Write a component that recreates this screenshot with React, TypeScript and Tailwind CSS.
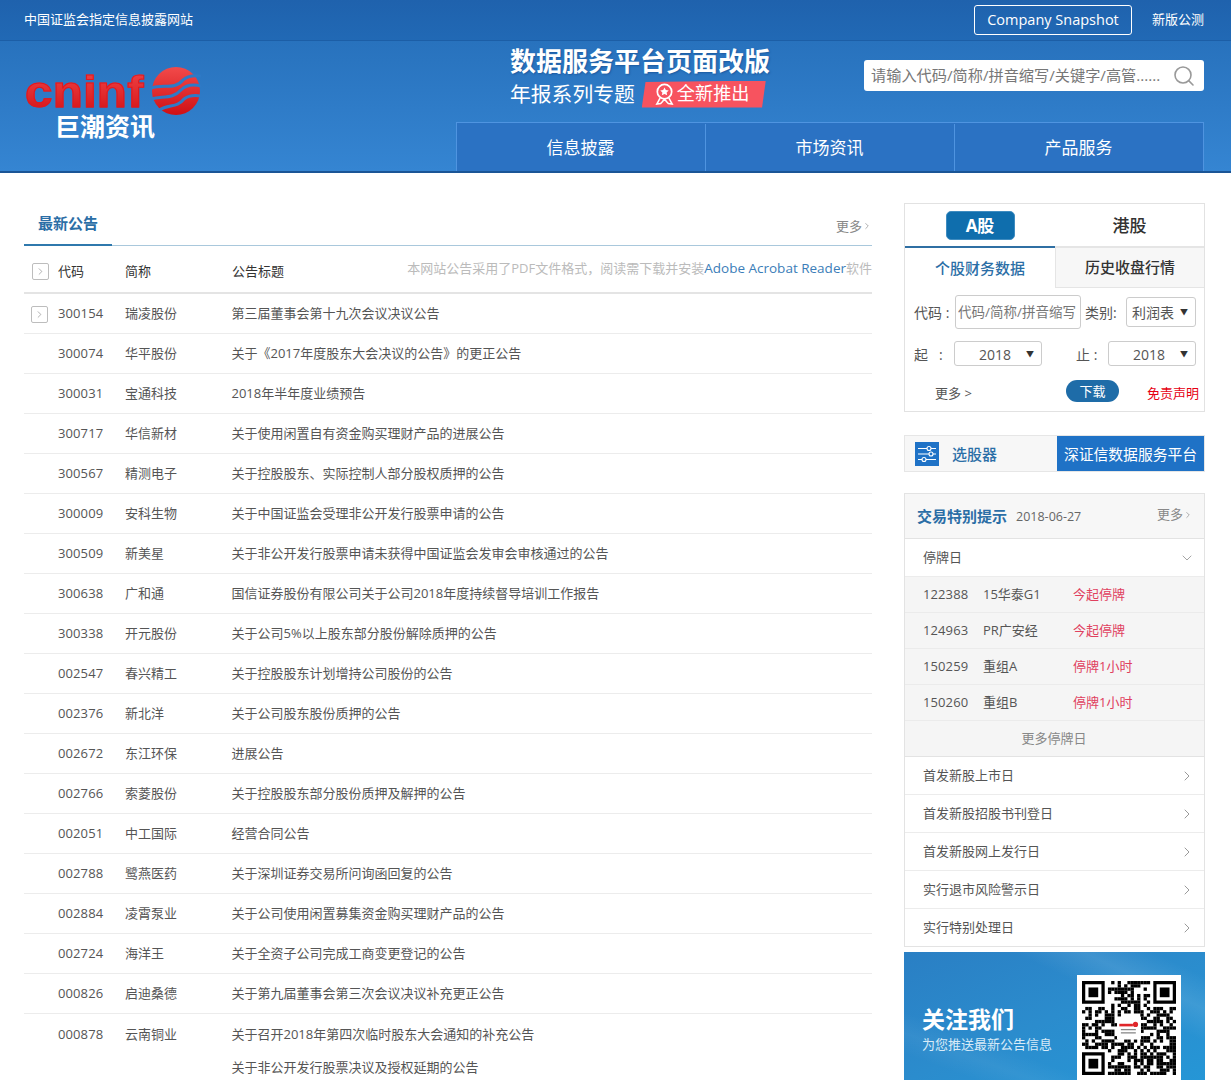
import React from "react";
import { ChevronRight, ChevronDown, Search } from "lucide-react";

const rows: [string, string, string][] = [
  ["300154", "瑞凌股份", "第三届董事会第十九次会议决议公告"],
  ["300074", "华平股份", "关于《2017年度股东大会决议的公告》的更正公告"],
  ["300031", "宝通科技", "2018年半年度业绩预告"],
  ["300717", "华信新材", "关于使用闲置自有资金购买理财产品的进展公告"],
  ["300567", "精测电子", "关于控股股东、实际控制人部分股权质押的公告"],
  ["300009", "安科生物", "关于中国证监会受理非公开发行股票申请的公告"],
  ["300509", "新美星", "关于非公开发行股票申请未获得中国证监会发审会审核通过的公告"],
  ["300638", "广和通", "国信证券股份有限公司关于公司2018年度持续督导培训工作报告"],
  ["300338", "开元股份", "关于公司5%以上股东部分股份解除质押的公告"],
  ["002547", "春兴精工", "关于控股股东计划增持公司股份的公告"],
  ["002376", "新北洋", "关于公司股东股份质押的公告"],
  ["002672", "东江环保", "进展公告"],
  ["002766", "索菱股份", "关于控股股东部分股份质押及解押的公告"],
  ["002051", "中工国际", "经营合同公告"],
  ["002788", "鹭燕医药", "关于深圳证券交易所问询函回复的公告"],
  ["002884", "凌霄泵业", "关于公司使用闲置募集资金购买理财产品的公告"],
  ["002724", "海洋王", "关于全资子公司完成工商变更登记的公告"],
  ["000826", "启迪桑德", "关于第九届董事会第三次会议决议补充更正公告"],
];

const halts = [
  ["122388", "15华泰G1", "今起停牌"],
  ["124963", "PR广安经", "今起停牌"],
  ["150259", "重组A", "停牌1小时"],
  ["150260", "重组B", "停牌1小时"],
];

const links = ["首发新股上市日", "首发新股招股书刊登日", "首发新股网上发行日", "实行退市风险警示日", "实行特别处理日"];

const Toggle = () => (
  <span className="flex h-[17px] w-[17px] items-center justify-center rounded-[2px] border border-[#bdbdbd] text-[#888]">
    <ChevronRight size={11} strokeWidth={1.4} />
  </span>
);

const Pick = ({ w, label, center, tall }: { w: string; label: string; center?: boolean; tall?: boolean }) => (
  <div className={`${w} ${tall ? "h-[30px]" : "h-[25px]"} flex items-center justify-between rounded-[3px] border border-[#ccc] pr-[7px] text-[14px] text-[#555] ${center ? "pl-[24px]" : "pl-[5px]"}`}>
    <span className="pt-[1px]">{label}</span>
    <span className="text-[8px] text-[#333]">▼</span>
  </div>
);

function QR() {
  const n = 29;
  const cells: React.ReactNode[] = [];
  let s = 628;
  const finder = (x: number, y: number, ox: number, oy: number) => {
    const dx = x - ox;
    const dy = y - oy;
    return dx >= -1 && dx <= 7 && dy >= -1 && dy <= 7;
  };
  for (let y = 0; y < n; y++) {
    for (let x = 0; x < n; x++) {
      s = (s * 1103515245 + 12345) & 0x7fffffff;
      const on = ((s >> 16) & 15) < 9;
      const inFinder = finder(x, y, 0, 0) || finder(x, y, 22, 0) || finder(x, y, 0, 22);
      const inLogo = x >= 11 && x <= 17 && y >= 11 && y <= 17;
      if (on && !inFinder && !inLogo) cells.push(<rect key={`${x}-${y}`} x={x} y={y} width="1.02" height="1.02" />);
    }
  }
  const F = ({ x, y }: { x: number; y: number }) => (
    <g>
      <path fillRule="evenodd" d={`M${x} ${y}h7v7h-7zM${x + 1} ${y + 1}v5h5v-5z`} />
      <rect x={x + 2} y={y + 2} width="3" height="3" />
    </g>
  );
  return (
    <svg viewBox="0 0 29 29" className="h-[94px] w-[94px]" fill="#000">
      {cells}
      <F x={0} y={0} />
      <F x={22} y={0} />
      <F x={0} y={22} />
      <rect x="10.8" y="11" width="7.4" height="7" fill="#fff" />
      <rect x="11.5" y="13.2" width="4.2" height="0.8" fill="#e0262a" />
      <circle cx="16.5" cy="13.4" r="0.8" fill="#e0262a" />
      <rect x="12" y="14.8" width="4.6" height="0.4" fill="#888" />
      <rect x="12" y="15.8" width="4.6" height="0.4" fill="#888" />
    </svg>
  );
}

export default function App() {
  return (
    <div className="h-[1080px] w-[1231px] overflow-hidden bg-white font-['Open_Sans','Noto_Sans_CJK_SC',sans-serif] text-[13px] text-[#555]">
      <header className="h-[173px] border-b-2 border-[#1a5596] bg-[#2a74bf]">
        <div className="flex h-[41px] items-center justify-between border-b border-[#1c5ea6] bg-gradient-to-b from-[#1f62ad] to-[#2169b5] pl-[24px] pr-[27px] text-white">
          <span className="text-[13px]">中国证监会指定信息披露网站</span>
          <div className="flex items-center">
            <span className="flex h-[30px] w-[158px] items-center justify-center rounded-[3px] border border-white text-[14.5px]">Company Snapshot</span>
            <span className="ml-[20px] text-[13px]">新版公测</span>
          </div>
        </div>
        <div className="flex h-[130px] justify-between bg-gradient-to-b from-[#2872bd] to-[#3585d2] pl-[25px] pr-[27px]">
          <div className="flex h-full w-[180px] flex-col pt-[29px]">
            <div className="relative h-[43px] w-[176px]">
              <span className="inline-block origin-left scale-x-[1.12] bg-gradient-to-b from-[#f04044] to-[#d40f15] bg-clip-text font-['Liberation_Sans',sans-serif] text-[44px] font-bold leading-[43px] tracking-[0.2px] text-transparent [-webkit-text-stroke:1px_#e0191f]">cninf</span>
              <svg viewBox="0 0 50 50" className="absolute left-[126px] top-[-4px] h-[50px] w-[50px]">
                <defs>
                  <linearGradient id="sph" x1="0" y1="0" x2="0" y2="1">
                    <stop offset="0" stopColor="#f24a4a" />
                    <stop offset="1" stopColor="#cf1015" />
                  </linearGradient>
                </defs>
                <circle cx="25" cy="25" r="24" fill="url(#sph)" />
                <path d="M0 22C12 18 24 24 32 14C36 10 42 9 50 10" stroke="#2e7ac6" strokeWidth="3" fill="none" />
                <path d="M0 33C12 30 22 33 30 24C35 19 42 18 50 20" stroke="#2e7ac6" strokeWidth="3" fill="none" />
                <path d="M8 44C18 38 26 42 33 33C38 29 44 29 50 30" stroke="#2e7ac6" strokeWidth="3" fill="none" />
              </svg>
            </div>
            <span className="ml-[30px] mt-[1px] text-[25px] font-bold leading-[24px] text-white">巨潮资讯</span>
          </div>
          <div className="flex flex-1 flex-col items-end">
            <div className="flex w-full justify-between">
              <div className="ml-[305px] pt-[2px]">
                <div className="text-[26px] font-bold leading-[36px] text-white [text-shadow:1px_1px_2px_#1c5aa0]">数据服务平台页面改版</div>
                <div className="mt-[1px] flex items-center text-white">
                  <span className="text-[20.8px] leading-[28px]">年报系列专题</span>
                  <span className="ml-[7px] flex h-[27px] w-[124px] items-center bg-[#f7535f] pl-[11px] text-[18.2px] [clip-path:polygon(3%_6%,100%_0,97%_100%,0_100%)]">
                    <svg viewBox="0 0 24 24" className="mr-[1px] h-[25px] w-[23px]" fill="none" stroke="#fff" strokeWidth="1.8">
                      <circle cx="12" cy="9" r="7.5" />
                      <path d="M12 4.6l1.4 2.8 3 .4-2.2 2.1.6 3-2.8-1.5-2.8 1.5.6-3-2.2-2.1 3-.4z" fill="#fff" stroke="none" />
                      <path d="M7.5 15.5L4 22l4-.6 2-2 2-2.6 2 2.6 2 2 4 .6-3.5-6.5" strokeWidth="1.6" />
                    </svg>
                    全新推出
                  </span>
                </div>
              </div>
              <div className="mt-[19px] flex h-[31px] w-[340px] items-center rounded-[3px] bg-white pl-[7px] pr-[8px]">
                <input readOnly placeholder="请输入代码/简称/拼音缩写/关键字/高管......" className="min-w-0 flex-1 bg-transparent text-[15.2px] outline-none placeholder:text-[#777]" />
                <Search size={24} strokeWidth={1.6} className="text-[#999]" />
              </div>
            </div>
            <nav className="mt-[14px] flex h-[49px] w-[748px] border-l border-r border-t border-[#4f94e0] bg-[#2b72c3] pt-[1px] text-[17px] text-white">
              {["信息披露", "市场资讯", "产品服务"].map((t, i) => (
                <div key={t} className={`flex flex-1 items-center justify-center pr-[1px] ${i > 0 ? "border-l border-[#4f94e0]" : ""}`}>{t}</div>
              ))}
            </nav>
          </div>
        </div>
      </header>

      <main className="flex items-start justify-between pl-[24px] pr-[26px] pt-[30px]">
        <section className="mt-[1px] w-[848px]">
          <div className="flex h-[42px] items-start justify-between border-b border-[#a9c8dc]">
            <div className="relative h-[41px] w-[88px] pl-[14px] pt-[7px] text-[15px] font-bold leading-[24px] text-[#2b6ea6]">
              最新公告
              <span className="absolute bottom-[-1px] left-0 h-[2px] w-full bg-[#2f79ad]" />
            </div>
            <span className="flex items-center pl-[1px] pt-[12px] text-[13px] leading-[20px] text-[#888]">更多<ChevronRight size={10} strokeWidth={1.6} /></span>
          </div>
          <div className="flex h-[48px] items-center border-b-2 border-[#e4e4e4] pt-[5px] text-[13px] text-[#333]">
            <div className="flex w-[34px] justify-start pl-[8px]"><Toggle /></div>
            <span className="w-[67px] pt-[1px]">代码</span>
            <span className="w-[107px] pt-[1px]">简称</span>
            <span className="pt-[1px]">公告标题</span>
            <span className="ml-auto pb-[6px] text-[#bbb]">本网站公告采用了PDF文件格式，阅读需下载并安装<span className="text-[13.5px] text-[#3b7db8]">Adobe Acrobat Reader</span>软件</span>
          </div>
          {rows.map((r, i) => (
            <div key={r[0]} className="relative flex h-[40px] items-center border-b border-[#ececec] pt-[1px]">
              <div className="flex w-[34px] justify-start pl-[7px]">{i === 0 && <Toggle />}</div>
              <span className="w-[67px] tracking-[0.1px]">{r[0]}</span>
              <span className="w-[107px]">{r[1]}</span>
              <span className="ml-[-0.5px]">{r[2]}</span>
            </div>
          ))}
          <div className="flex items-start pt-[10px]">
            <div className="w-[34px]" />
            <span className="w-[67px] leading-[20px] tracking-[0.1px]">000878</span>
            <span className="w-[107px] leading-[20px]">云南铜业</span>
            <div className="ml-[-0.5px] flex flex-col">
              <span className="leading-[20px]">关于召开2018年第四次临时股东大会通知的补充公告</span>
              <span className="mt-[13px] leading-[20px]">关于非公开发行股票决议及授权延期的公告</span>
            </div>
          </div>
        </section>

        <aside className="w-[301px]">
          <div className="h-[209px] border border-[#e2e2e2]">
            <div className="flex h-[42px]">
              <div className="flex w-[150px] items-start justify-center pt-[7px]">
                <span className="flex h-[29px] w-[69px] items-center justify-center rounded-[5px] border border-[#3f8cc0] bg-[#0f6ead] text-[17px] font-bold text-white">A股</span>
              </div>
              <div className="flex flex-1 items-center justify-center pt-[1px] text-[17px] font-medium text-[#333]">港股</div>
            </div>
            <div className="flex h-[42px] border-t-2 border-[#e5e5e5]">
              <div className="relative flex w-[150px] items-center justify-center text-[15px] font-medium text-[#2b6ea6]">
                <span className="absolute left-0 right-0 top-[-2px] h-[2px] bg-[#2f6fa3]" />
                个股财务数据
              </div>
              <div className="flex flex-1 items-center justify-center border-b border-l border-[#e5e5e5] bg-[#f7f7f7] text-[15px] font-medium text-[#333]">历史收盘行情</div>
            </div>
            <div className="flex h-[41px] items-center whitespace-nowrap pl-[9px] pt-[7px] text-[14px] text-[#555]">
              <span className="w-[41px]">代码 :</span>
              <input readOnly placeholder="代码/简称/拼音缩写" className="h-[34px] w-[126px] rounded-[3px] border border-[#ccc] pl-[2px] text-[13.5px] outline-none placeholder:text-[#777]" />
              <span className="ml-[4px] w-[41px]">类别:</span>
              <Pick w="w-[70px]" label="利润表" tall />
            </div>
            <div className="mt-[12px] flex h-[25px] items-center whitespace-nowrap pl-[9px] text-[14px] text-[#555]">
              <span className="w-[40px] pt-[1px]">起&nbsp;&nbsp;&nbsp;:</span>
              <Pick w="w-[88px]" label="2018" center />
              <span className="ml-[34px] w-[32px] pt-[1px]">止 :</span>
              <Pick w="w-[88px]" label="2018" center />
            </div>
            <div className="mt-[13px] flex items-center pl-[30px] text-[13px]">
              <span className="mt-[5px] w-[131px]">更多 &gt;</span>
              <span className="flex h-[22px] w-[53px] items-center justify-center rounded-full bg-[#1e6ca8] text-[13px] text-white">下载</span>
              <span className="ml-[28px] mt-[5px] text-[#e60012]">免责声明</span>
            </div>
          </div>

          <div className="mt-[23px] flex h-[37px] border border-[#e6e6e6] bg-[#f7f7f7]">
            <div className="flex flex-1 items-center pl-[10px]">
              <span className="flex h-[24px] w-[24px] items-center justify-center bg-[#1f72c6]">
                <svg viewBox="0 0 24 24" className="h-[24px] w-[24px]" fill="#1f72c6" stroke="#fff" strokeWidth="1.1">
                  <path d="M3 6.5h18M3 12h18M3 17.5h18" />
                  <circle cx="14" cy="6.5" r="2" />
                  <circle cx="16" cy="12" r="2" />
                  <circle cx="9" cy="17.5" r="2" />
                </svg>
              </span>
              <span className="ml-[13px] pt-[1px] text-[15px] font-medium text-[#2a6ea6]">选股器</span>
            </div>
            <div className="flex w-[147px] items-center justify-center bg-[#1f72c6] pt-[1px] text-[14.8px] text-white">深证信数据服务平台</div>
          </div>

          <div className="mt-[21px] border border-[#e3e3e3]">
            <div className="flex h-[45px] items-center border-b border-[#e3e3e3] bg-[#f7f7f7] pl-[12px] pr-[11px]">
              <span className="text-[15px] font-bold text-[#2b6ea6]">交易特别提示</span>
              <span className="ml-[9px] mt-[3px] text-[12.5px] text-[#666]">2018-06-27</span>
              <span className="ml-auto flex items-center pb-[3px] text-[13px] text-[#888]">更多<ChevronRight size={10} strokeWidth={1.6} /></span>
            </div>
            <div className="flex h-[38px] items-center justify-between border-b border-[#ececec] pl-[18px] pr-[9px] pt-[1px]">
              <span>停牌日</span>
              <ChevronDown size={16} strokeWidth={1} className="text-[#777]" />
            </div>
            <div className="bg-[#f5f5f5]">
              {halts.map((h) => (
                <div key={h[0]} className="flex h-[36px] items-center border-b border-[#ebebeb] pl-[18px] pt-[1px]">
                  <span className="w-[60px] tracking-[0.1px]">{h[0]}</span>
                  <span className="w-[90px]">{h[1]}</span>
                  <span className="text-[#e0405e]">{h[2]}</span>
                </div>
              ))}
              <div className="flex h-[36px] items-center justify-center border-b border-[#e3e3e3] pr-[1px] pt-[1px] text-[#888]">更多停牌日</div>
            </div>
            {links.map((l, i) => (
              <div key={l} className={`flex items-center justify-between pl-[18px] pr-[9px] pt-[1px] ${i < links.length - 1 ? "h-[38px] border-b border-[#ececec]" : "h-[37px]"}`}>
                <span>{l}</span>
                <ChevronRight size={16} strokeWidth={1} className="text-[#666]" />
              </div>
            ))}
          </div>

          <div className="relative mt-[5px] flex h-[128px] items-start overflow-hidden bg-gradient-to-br from-[#2a7fc4] via-[#2b8ccd] to-[#2596d6]">
            <div className="absolute left-[40px] top-[-20px] h-[60px] w-[320px] rotate-[25deg] bg-gradient-to-b from-transparent via-white/10 to-transparent" />
            <div className="absolute left-[-40px] top-[90px] h-[40px] w-[240px] rotate-[20deg] bg-gradient-to-b from-transparent via-white/5 to-transparent" />
            <div className="relative ml-[18px] mt-[51px] w-[155px] text-white">
              <div className="text-[23px] font-bold leading-[32px]">关注我们</div>
              <div className="mt-[-1px] text-[13px] leading-[20px] text-[#d8ebf8]">为您推送最新公告信息</div>
            </div>
            <div className="relative mt-[23px] flex h-[110px] w-[104px] justify-center bg-white pt-[6px]"><QR /></div>
          </div>
        </aside>
      </main>
    </div>
  );
}
